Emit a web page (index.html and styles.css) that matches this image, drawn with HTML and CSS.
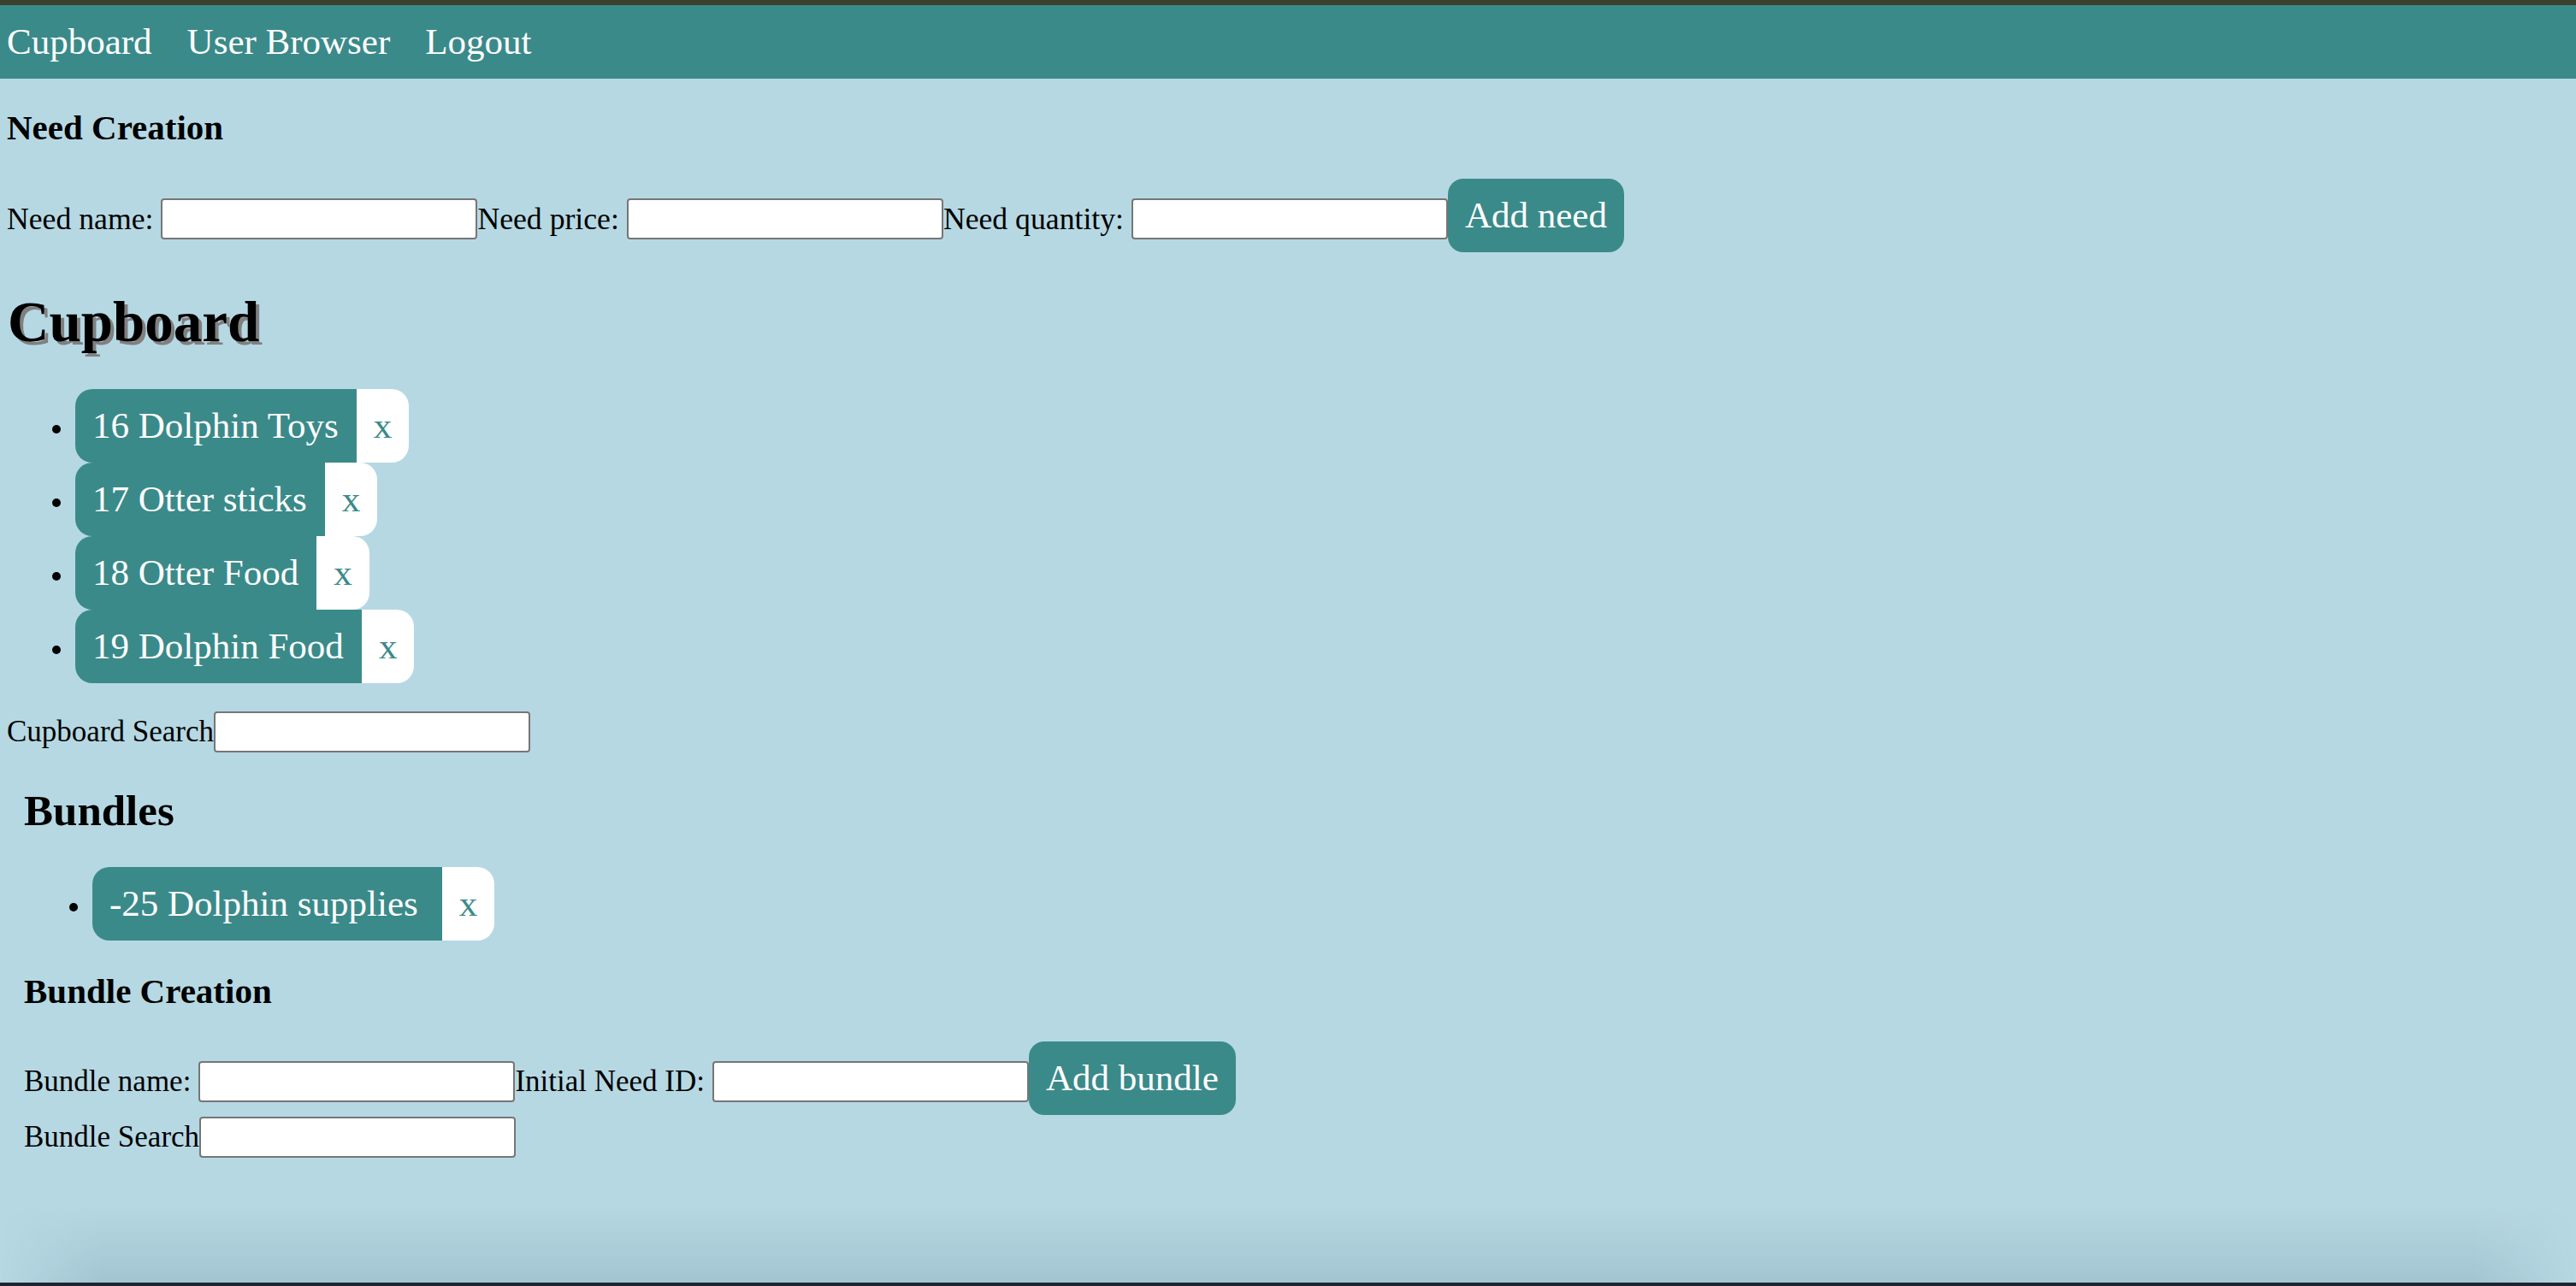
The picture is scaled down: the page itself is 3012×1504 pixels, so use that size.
FILE: index.html
```html
<!DOCTYPE html>
<html lang="en">
<head>
<meta charset="utf-8">
<title>Cupboard</title>
<link rel="stylesheet" href="styles.css">
</head>
<body>
<div class="topbar"></div>
<nav class="nav">
  <a class="nav-link" href="#">Cupboard</a>
  <a class="nav-link" href="#">User Browser</a>
  <a class="nav-link" href="#">Logout</a>
</nav>
<main class="page">
  <section class="need-creation">
    <h4 class="subhead">Need Creation</h4>
    <div class="form-row">
      <label class="lbl spaced">Need name:</label><input class="field" type="text">
      <label class="lbl spaced">Need price:</label><input class="field" type="text">
      <label class="lbl spaced">Need quantity:</label><input class="field" type="text">
      <button class="btn">Add need</button>
    </div>
  </section>

  <h1 class="title">Cupboard</h1>
  <ul class="items">
    <li><span class="pill"><span class="pill-main">16 Dolphin Toys</span><span class="pill-x">x</span></span></li>
    <li><span class="pill"><span class="pill-main">17 Otter sticks</span><span class="pill-x">x</span></span></li>
    <li><span class="pill"><span class="pill-main">18 Otter Food</span><span class="pill-x">x</span></span></li>
    <li><span class="pill"><span class="pill-main">19 Dolphin Food</span><span class="pill-x">x</span></span></li>
  </ul>
  <div class="form-row search-row">
    <label class="lbl">Cupboard Search</label><input class="field" type="text">
  </div>

  <section class="bundles">
    <h2 class="bundles-title">Bundles</h2>
    <ul class="items bundle-items">
      <li><span class="pill"><span class="pill-main">-25 Dolphin supplies</span><span class="pill-x">x</span></span></li>
    </ul>
    <h4 class="subhead bundle-sub">Bundle Creation</h4>
    <div class="form-row bundle-row">
      <label class="lbl spaced">Bundle name:</label><input class="field" type="text">
      <label class="lbl spaced">Initial Need ID:</label><input class="field" type="text">
      <button class="btn">Add bundle</button>
    </div>
    <div class="form-row bundle-search">
      <label class="lbl">Bundle Search</label><input class="field" type="text">
    </div>
  </section>
</main>
</body>
</html>
```

FILE: styles.css
```css
html, body {
  margin: 0;
  padding: 0;
}

body {
  background: #b6d8e3;
  font-family: "Liberation Serif", "Times New Roman", serif;
  color: #000;
  min-height: 1504px;
  overflow: hidden;
}

body::after {
  content: "";
  position: fixed;
  left: 0;
  right: 0;
  bottom: 4px;
  height: 90px;
  background: linear-gradient(to bottom, rgba(30, 70, 90, 0), rgba(30, 70, 90, 0.13));
  -webkit-mask-image: linear-gradient(to right, transparent 0, #000 4%, #000 96%, transparent 100%);
  mask-image: linear-gradient(to right, transparent 0, #000 4%, #000 96%, transparent 100%);
  pointer-events: none;
}

body::before {
  content: "";
  position: fixed;
  left: 0;
  right: 0;
  bottom: 0;
  height: 4px;
  background: #1d2530;
  pointer-events: none;
}

.topbar {
  height: 6px;
  background: #3a3f2e;
}

.nav {
  display: flex;
  align-items: center;
  gap: 41px;
  height: 86px;
  padding: 0 8px;
  background: #3b8a8a;
}

.nav-link {
  color: #fff;
  text-decoration: none;
  font-size: 43px;
  line-height: 50px;
}

.page {
  padding: 0 8px;
}

.subhead {
  margin: 33px 0 0;
  font-size: 41px;
  line-height: 48px;
  font-weight: bold;
}

.form-row {
  display: flex;
  align-items: center;
  margin-top: 36px;
}

.form-row .lbl,
.form-row .field {
  margin-top: 8px;
}

.lbl {
  font-size: 35px;
  line-height: 40px;
  white-space: nowrap;
}

.need-creation .lbl {
  font-size: 35.7px;
}

.lbl.spaced {
  margin-right: 9px;
}

.field {
  box-sizing: border-box;
  width: 370px;
  height: 48px;
  border: 2px solid #767676;
  border-radius: 4px;
  background: #fff;
  font-family: "Liberation Serif", serif;
  font-size: 26px;
  padding: 0 6px;
  flex: none;
}

.btn {
  font-family: "Liberation Serif", "Times New Roman", serif;
  font-size: 43px;
  line-height: 50px;
  padding: 18px 20px;
  border: none;
  border-radius: 18px;
  background: #3b8a8a;
  color: #fff;
  flex: none;
}

.title {
  margin: 43px 0 0 1px;
  font-size: 67px;
  line-height: 77px;
  font-weight: bold;
  text-shadow: 4px 4px 0 #808080;
}

.items {
  margin: 40px 0 0;
  padding-left: 80px;
  font-size: 35px;
}

.items li {
  line-height: 1;
}

.pill {
  display: inline-flex;
  vertical-align: baseline;
  font-size: 43px;
  line-height: 50px;
}

.pill-main {
  background: #3b8a8a;
  color: #fff;
  padding: 18px 21px 18px 20px;
  border-radius: 20px 0 0 20px;
}

.bundle-items .pill-main {
  padding-right: 28px;
}

.pill-x {
  background: #fff;
  color: #3b8a8a;
  padding: 18px 20px;
  border-radius: 0 20px 20px 0;
}

.search-row {
  margin-top: 33px;
}

.search-row .lbl,
.search-row .field,
.bundle-search .lbl,
.bundle-search .field {
  margin-top: 0;
}

.bundles {
  padding-left: 20px;
}

.bundles-title {
  margin: 39px 0 0;
  font-size: 51px;
  line-height: 58px;
  font-weight: bold;
}

.bundle-items {
  margin-top: 37px;
}

.bundle-sub {
  margin-top: 35px;
}

.bundle-row {
  margin-top: 35px;
}

.bundle-search {
  margin-top: 2px;
}
```
